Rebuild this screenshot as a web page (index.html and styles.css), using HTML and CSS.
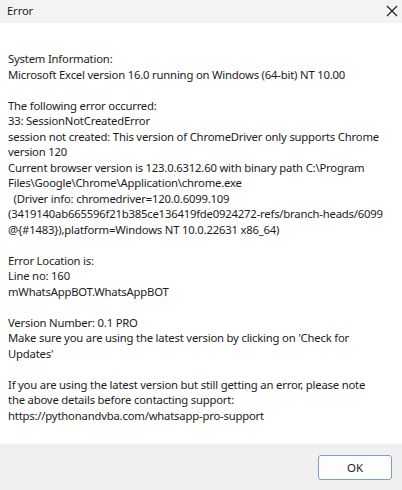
FILE: index.html
```html
<!DOCTYPE html>
<html>
<head>
<meta charset="utf-8">
<link rel="stylesheet" href="styles.css">
</head>
<body>
<div class="dialog">
  <div class="titlebar">
    <span class="title">Error</span>
    <svg class="close" width="12" height="12" viewBox="0 0 12 12"><path d="M1 1 L11 11 M11 1 L1 11" stroke="#1a1a1a" stroke-width="1.1" fill="none"/></svg>
  </div>
  <div class="content">
    <p>System Information:<br>Microsoft Excel version 16.0 running on Windows (64-bit) NT 10.00</p>
    <p>The following error occurred:<br>33: SessionNotCreatedError<br>session not created: This version of ChromeDriver only supports Chrome<br>version 120<br>Current browser version is 123.0.6312.60 with binary path C:\Program<br>Files\Google\Chrome\Application\chrome.exe<br>&nbsp;&nbsp;(Driver info: chromedriver=120.0.6099.109<br>(3419140ab665596f21b385ce136419fde0924272-refs/branch-heads/6099<br>@{#1483}),platform=Windows NT 10.0.22631 x86_64)</p>
    <p>Error Location is:<br>Line no: 160<br>mWhatsAppBOT.WhatsAppBOT</p>
    <p>Version Number: 0.1 PRO<br>Make sure you are using the latest version by clicking on 'Check for<br>Updates'</p>
    <p>If you are using the latest version but still getting an error, please note<br>the above details before contacting support:<br>https://pythonandvba.com/whatsapp-pro-support</p>
  </div>
  <div class="footer">
    <button class="ok">OK</button>
  </div>
</div>
</body>
</html>
```
FILE: styles.css
```css
html, body {
  margin: 0;
  padding: 0;
  background: #ffffff;
}
.dialog {
  width: 402px;
  height: 490px;
  display: flex;
  flex-direction: column;
  font-family: "Noto Sans", "Open Sans", sans-serif;
  color: #1c1c1c;
  overflow: hidden;
}
.titlebar {
  height: 23px;
  flex: none;
  background: #f3f2f5;
  display: flex;
  align-items: center;
  justify-content: space-between;
  padding: 0 4px 0 7px;
}
.title {
  font-size: 11.2px;
  letter-spacing: -0.1px;
  line-height: 1;
  margin-top: -2px;
}
.close {
  margin-top: -1px;
}
.content {
  flex: 1;
  min-height: 0;
  overflow: hidden;
  background: #ffffff;
  padding: 28px 0 0 8px;
  font-size: 11.3px;
  letter-spacing: -0.2px;
  line-height: 15.5px;
  white-space: nowrap;
}
.content p {
  margin: 0 0 15.5px 0;
}
.footer {
  height: 46px;
  flex: none;
  background: #f0f0f0;
  display: flex;
  justify-content: flex-end;
  align-items: flex-start;
  padding: 11px 10px 0 0;
  box-sizing: border-box;
}
.ok {
  width: 74px;
  height: 25px;
  box-sizing: border-box;
  border: 1px solid #7b9ec4;
  border-radius: 3px;
  background: #fdfdfd;
  font-family: "Noto Sans", sans-serif;
  font-size: 11.5px;
  color: #1c1c1c;
  padding: 0;
}
```
